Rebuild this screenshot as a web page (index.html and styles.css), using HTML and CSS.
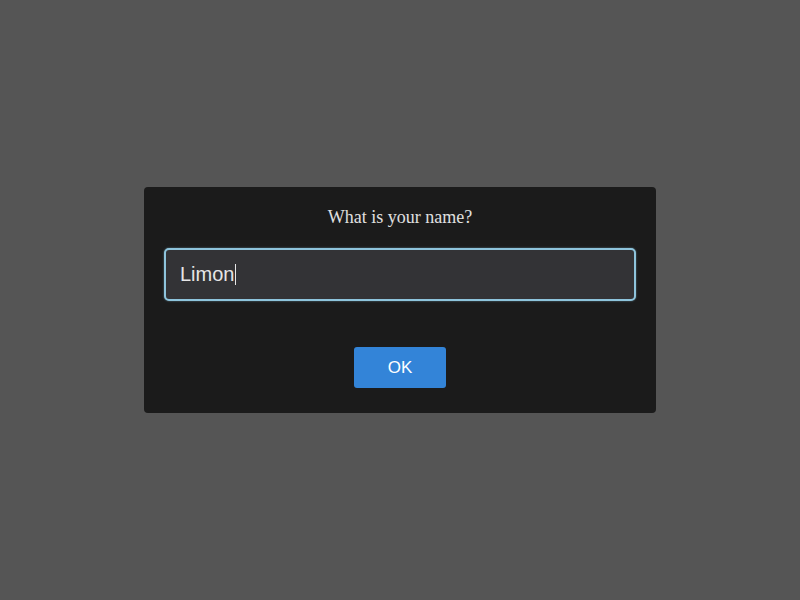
FILE: index.html
```html
<!DOCTYPE html>
<html>
<head>
<meta charset="utf-8">
<link rel="stylesheet" href="styles.css">
</head>
<body>
<div class="dialog">
  <div class="title">What is your name?</div>
  <div class="field"><span class="value">Limon</span><span class="caret"></span></div>
  <div class="actions"><button class="ok">OK</button></div>
</div>
</body>
</html>
```
FILE: styles.css
```css
html, body {
  margin: 0;
  height: 100%;
}
body {
  background: #555555;
  display: flex;
  align-items: flex-start;
  justify-content: center;
}
.dialog {
  margin-top: 187px;
  width: 472px;
  padding: 20px 20px 25px;
  background: #1b1b1b;
  border-radius: 4px;
  display: flex;
  flex-direction: column;
}
.title {
  font-family: "Liberation Serif", serif;
  font-size: 18px;
  line-height: 21px;
  color: #e0e0e0;
  text-align: center;
}
.field {
  margin-top: 20px;
  height: 49px;
  box-sizing: content-box;
  border: 2px solid #8ec4dc;
  border-radius: 5px;
  box-shadow: 0 0 2px rgba(142, 196, 220, 0.6);
  background: #333336;
  display: flex;
  align-items: center;
  padding: 0 14px;
  font-family: "Liberation Sans", Arial, sans-serif;
  font-size: 20px;
  color: #e6e6e6;
}
.caret {
  display: inline-block;
  width: 1px;
  height: 21px;
  background: #e6e6e6;
  margin-left: 1px;
}
.actions {
  margin-top: 46px;
  display: flex;
  justify-content: center;
}
.ok {
  width: 92px;
  height: 41px;
  border: none;
  border-radius: 3px;
  background: #3384d8;
  color: #ffffff;
  font-family: "Liberation Sans", Arial, sans-serif;
  font-size: 17px;
  padding: 0;
}
```
